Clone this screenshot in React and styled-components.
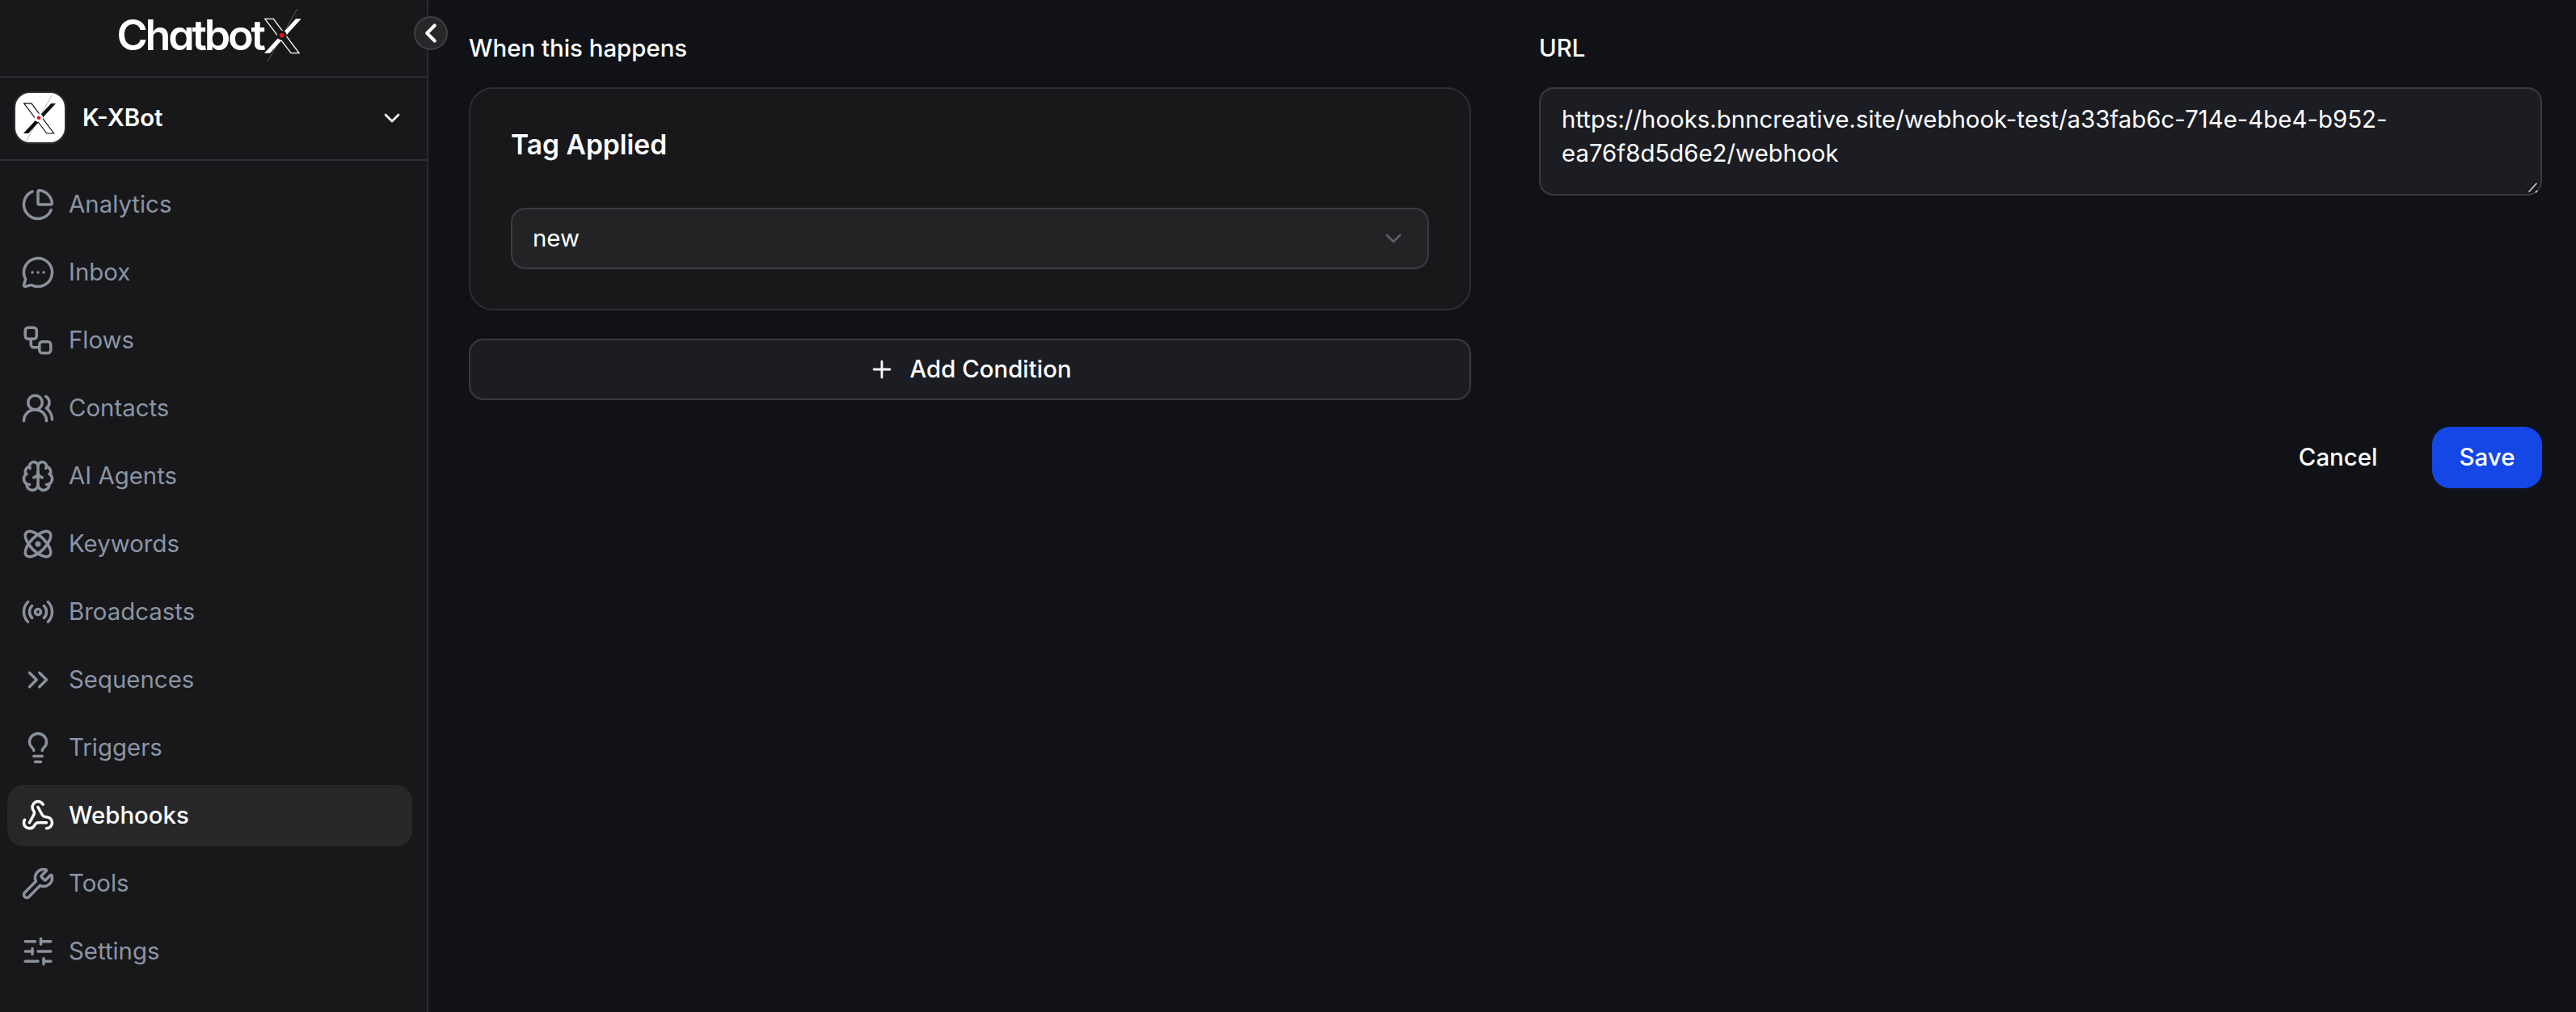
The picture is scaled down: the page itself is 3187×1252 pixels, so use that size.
import React from "react";
import styled, { createGlobalStyle } from "styled-components";
import {
  ChartPie, MessageCircleMore, Workflow, UsersRound, Brain, Atom, Radio,
  ChevronsRight, Lightbulb, Webhook, Wrench, SlidersHorizontal,
  ChevronDown, ChevronLeft, Plus,
} from "lucide-react";

const Global = createGlobalStyle`
  html, body { margin: 0; padding: 0; background: #101218; }
  body { font-family: Inter, "Noto Sans", sans-serif; color: #fff; }
  * { box-sizing: border-box; }
`;

const Page = styled.div`
  display: flex;
  height: 100vh;
  overflow: hidden;
`;

const Sidebar = styled.aside`
  position: relative;
  flex: 0 0 530px;
  display: flex;
  flex-direction: column;
  background: #18181b;
  border-right: 2px solid #2a2b30;
`;

const Brand = styled.div`
  height: 96px;
  flex: none;
  display: flex;
  align-items: flex-start;
  justify-content: center;
  gap: 1px;
  padding: 11px 9px 0 0;
  border-bottom: 2px solid #2e2e32;
`;

const BrandName = styled.span`
  font-size: 52px;
  line-height: 66px;
  font-weight: 600;
  letter-spacing: -3.2px;
  font-feature-settings: "cv11";
  color: #fff;
`;

const Collapse = styled.button`
  position: absolute;
  top: 20px;
  right: -26px;
  width: 42px;
  height: 42px;
  padding: 0;
  display: flex;
  align-items: center;
  justify-content: center;
  border-radius: 50%;
  border: 2px solid #3f3f44;
  background: #27272a;
  color: #fff;
`;

const Account = styled.div`
  height: 103px;
  flex: none;
  display: flex;
  align-items: center;
  gap: 20px;
  padding: 0 27px 2px 17px;
  border-bottom: 2px solid #2e2e32;
`;

const Avatar = styled.div`
  flex: none;
  width: 65px;
  height: 65px;
  display: flex;
  align-items: center;
  justify-content: center;
  background: #fff;
  border: 2px solid #2f2f33;
  border-radius: 20px;
`;

const AccountName = styled.span`
  flex: 1;
  font-size: 29.4px;
  line-height: 42px;
  font-weight: 600;
  color: #fff;
`;

const Nav = styled.nav`
  display: flex;
  flex-direction: column;
  gap: 8px;
  padding: 16px 18px 0 9px;
`;

const NavItem = styled.a`
  height: 76px;
  display: flex;
  align-items: center;
  gap: 17px;
  padding: 0 0 1px 17px;
  border-radius: 20px;
  font-size: 29.4px;
  font-weight: ${(p) => (p.$active ? 500 : 400)};
  color: ${(p) => (p.$active ? "#ffffff" : "#8b95a5")};
  background: ${(p) => (p.$active ? "#27272a" : "transparent")};
`;

const Main = styled.main`
  flex: 1;
  min-width: 0;
  padding: 40px 42px 0 50px;
`;

const Columns = styled.div`
  display: grid;
  grid-template-columns: 1240px 1241px;
  column-gap: 84px;
`;

const Column = styled.div`
  display: flex;
  flex-direction: column;
`;

const FieldLabel = styled.label`
  font-size: 29.4px;
  line-height: 40px;
  font-weight: 500;
  color: #fff;
  margin-bottom: 28px;
`;

const Card = styled.section`
  height: 276px;
  padding: 45px 50px 0 50px;
  background: #18181b;
  border: 2px solid #2d2e33;
  border-radius: 30px;
`;

const CardTitle = styled.h3`
  margin: 0 0 54px;
  font-size: 33.6px;
  line-height: 48px;
  font-weight: 600;
  color: #fff;
`;

const SelectBox = styled.button`
  width: 100%;
  height: 76px;
  display: flex;
  align-items: center;
  justify-content: space-between;
  padding: 0 26px 0 25px;
  background: #232326;
  border: 2px solid #3c3c41;
  border-radius: 18px;
  color: #fff;
  font: 400 29.4px/42px Inter, sans-serif;
`;

const AddButton = styled.button`
  margin-top: 35px;
  height: 76px;
  display: flex;
  align-items: center;
  justify-content: center;
  gap: 17px;
  background: #1b1d23;
  border: 2px solid #3a3b40;
  border-radius: 18px;
  color: #fff;
  font: 500 29.4px/42px Inter, sans-serif;
`;

const UrlField = styled.div`
  position: relative;
`;

const UrlInput = styled.textarea`
  display: block;
  width: 100%;
  height: 134px;
  padding: 17px 26px;
  background: #1b1d23;
  border: 2px solid #3a3b40;
  border-radius: 18px;
  outline: none;
  resize: none;
  color: #fff;
  font: 400 29.4px/42px Inter, sans-serif;
`;

const ResizeGrip = styled.svg`
  position: absolute;
  right: 3px;
  bottom: 2px;
  pointer-events: none;
`;

const Actions = styled.div`
  margin-top: 33px;
  display: flex;
  justify-content: flex-end;
  gap: 34px;
`;

const TextButton = styled.button`
  height: 76px;
  padding: 0 33.6px;
  background: transparent;
  border: 0;
  color: #fff;
  font: 500 29.4px/42px Inter, sans-serif;
`;

const PrimaryButton = styled(TextButton)`
  width: 136px;
  padding: 0;
  background: #1447e6;
  border-radius: 22px;
`;

function LogoMark({ width, height, ink, paper, thread }) {
  return (
    <svg width={width} height={height} viewBox="0 0 48 66" fill="none">
      <path d="M40.7 0 4.3 65" stroke={thread} strokeWidth="0.7" />
      <path d="M.7 12.3h10.6L43 54.7H33z" stroke={ink} strokeWidth="1.3" fill={paper} />
      <path d="M39 12.3h6.7L7 54.7H0z" fill={ink} />
      <circle cx="21.7" cy="32.7" r="6" fill={paper} />
      <circle cx="21.7" cy="32.7" r="2.7" fill="#f01010" />
    </svg>
  );
}

const items = [
  ["Analytics", ChartPie],
  ["Inbox", MessageCircleMore],
  ["Flows", Workflow],
  ["Contacts", UsersRound],
  ["AI Agents", Brain],
  ["Keywords", Atom],
  ["Broadcasts", Radio],
  ["Sequences", ChevronsRight],
  ["Triggers", Lightbulb],
  ["Webhooks", Webhook],
  ["Tools", Wrench],
  ["Settings", SlidersHorizontal],
];

export default function App() {
  return (
    <Page>
      <Global />
      <Sidebar>
        <Brand>
          <BrandName>Chatbot</BrandName>
          <LogoMark width={48} height={66} ink="#ffffff" paper="#18181b" thread="#77777c" />
        </Brand>
        <Collapse aria-label="Collapse sidebar">
          <ChevronLeft size={40} strokeWidth={2.6} />
        </Collapse>
        <Account>
          <Avatar>
            <LogoMark width={42} height={58} ink="#0b0b0b" paper="#ffffff" thread="#8a8a8a" />
          </Avatar>
          <AccountName>K-XBot</AccountName>
          <ChevronDown size={32} strokeWidth={2} color="#ffffff" />
        </Account>
        <Nav>
          {items.map(([label, Icon]) => {
            const active = label === "Webhooks";
            return (
              <NavItem key={label} $active={active}>
                <Icon size={42} strokeWidth={2} color={active ? "#ffffff" : "#8b919c"} />
                {label}
              </NavItem>
            );
          })}
        </Nav>
      </Sidebar>
      <Main>
        <Columns>
          <Column>
            <FieldLabel>When this happens</FieldLabel>
            <Card>
              <CardTitle>Tag Applied</CardTitle>
              <SelectBox>
                new
                <ChevronDown size={32} strokeWidth={2} color="#5e5e63" />
              </SelectBox>
            </Card>
            <AddButton>
              <Plus size={34} strokeWidth={2} />
              Add Condition
            </AddButton>
          </Column>
          <Column>
            <FieldLabel>URL</FieldLabel>
            <UrlField>
              <UrlInput defaultValue="https://hooks.bnncreative.site/webhook-test/a33fab6c-714e-4be4-b952-ea76f8d5d6e2/webhook" />
              <ResizeGrip width="16" height="16" viewBox="0 0 16 16" fill="none">
                <path d="M2 14 13 2M10 15l4-4" stroke="#0c0c0e" strokeWidth="5" />
                <path d="M2.5 13.5 12.5 2.5M10.5 14.5l3-3" stroke="#a9a9ad" strokeWidth="2.2" />
              </ResizeGrip>
            </UrlField>
          </Column>
        </Columns>
        <Actions>
          <TextButton>Cancel</TextButton>
          <PrimaryButton>Save</PrimaryButton>
        </Actions>
      </Main>
    </Page>
  );
}
